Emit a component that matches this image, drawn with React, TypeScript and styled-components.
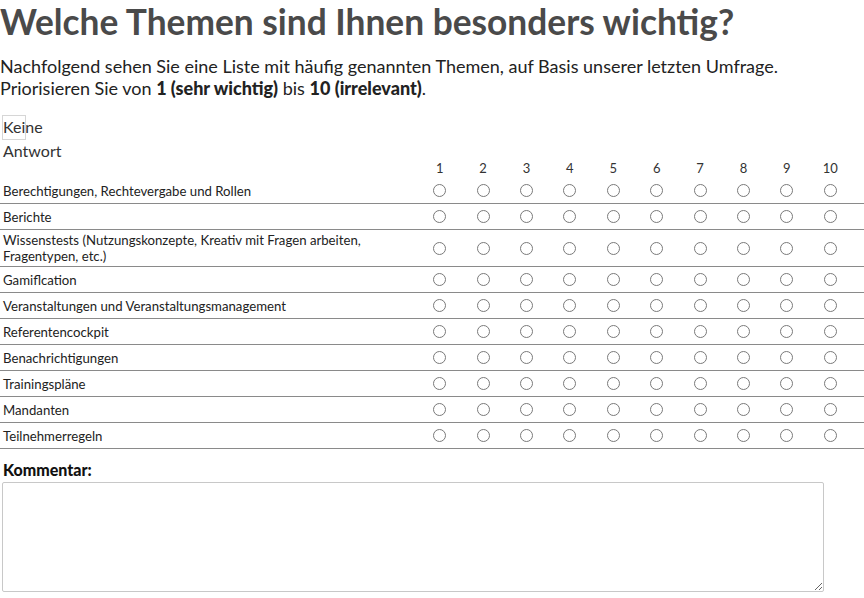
import React from 'react'
import styled, { createGlobalStyle } from 'styled-components'

const GlobalStyle = createGlobalStyle`
  html, body {
    margin: 0;
    padding: 0;
    background: #fff;
  }

  body {
    font-family: Lato, 'Noto Sans', sans-serif;
    color: #222;
  }
`

const Wrapper = styled.div`
  width: 864px;
  padding: 0 0 6px 0;
`

const Title = styled.h1`
  margin: 0;
  font-size: 35.3px;
  line-height: 44px;
  font-weight: 700;
  color: #4a4a4a;
`

const Intro = styled.p`
  margin: 11px 0 0;
  font-size: 18px;
  line-height: 22px;
  color: #222;

  strong {
    font-weight: 900;
  }
`

const Table = styled.div`
  margin-top: 16px;
`

const Grid = styled.div`
  display: grid;
  grid-template-columns: 418px repeat(10, 43.4px) 1fr;
`

const HeaderRow = styled(Grid)`
  align-items: end;
  min-height: 61px;
  padding-bottom: 2px;
`

const NoAnswer = styled.div`
  position: relative;
  align-self: start;
  width: 60px;
  padding-left: 3px;
  font-size: 16px;
  line-height: 24px;
  color: #333;
`

const NoAnswerBox = styled.span`
  position: absolute;
  left: 2px;
  top: 0;
  width: 22px;
  height: 23px;
  border: 1px solid #d6d6d6;
`

const ColNumber = styled.div`
  text-align: center;
  font-size: 13px;
  line-height: 15px;
  color: #333;
`

const Row = styled(Grid)<{ $tall?: boolean }>`
  align-items: center;
  min-height: ${(p) => (p.$tall ? 36 : 25)}px;
  border-bottom: 1px solid #8a8a8a;
`

const Label = styled.div`
  padding: 2px 20px 2px 3px;
  font-size: 13.2px;
  line-height: 16px;
  color: #222;
`

const Cell = styled.div`
  display: flex;
  justify-content: center;
`

const Radio = styled.input`
  appearance: none;
  margin: 0;
  width: 13px;
  height: 13px;
  border: 1px solid #7a7a7a;
  border-radius: 50%;
  background: #fff;
`

const CommentLabel = styled.label`
  display: block;
  margin-top: 13px;
  padding-left: 3px;
  font-size: 16px;
  line-height: 16px;
  font-weight: 900;
  color: #111;
`

const CommentBox = styled.textarea`
  display: block;
  box-sizing: border-box;
  margin: 4px 0 0 2px;
  width: 822px;
  height: 110px;
  border: 1px solid #c8c8c8;
  border-radius: 2px;
  font-family: inherit;
`

const topics = [
  'Berechtigungen, Rechtevergabe und Rollen',
  'Berichte',
  'Wissenstests (Nutzungskonzepte, Kreativ mit Fragen arbeiten, Fragentypen, etc.)',
  'Gamiflcation',
  'Veranstaltungen und Veranstaltungsmanagement',
  'Referentencockpit',
  'Benachrichtigungen',
  'Trainingspläne',
  'Mandanten',
  'Teilnehmerregeln',
]

const ranks = [1, 2, 3, 4, 5, 6, 7, 8, 9, 10]

export default function App() {
  return (
    <Wrapper>
      <GlobalStyle />
      <Title>Welche Themen sind Ihnen besonders wichtig?</Title>
      <Intro>
        Nachfolgend sehen Sie eine Liste mit häufig genannten Themen, auf Basis unserer letzten Umfrage.
        <br />
        Priorisieren Sie von <strong>1 (sehr wichtig)</strong> bis <strong>10 (irrelevant)</strong>.
      </Intro>

      <Table>
        <HeaderRow>
          <NoAnswer>
            <NoAnswerBox />
            Keine Antwort
          </NoAnswer>
          {ranks.map((r) => (
            <ColNumber key={r}>{r}</ColNumber>
          ))}
        </HeaderRow>
        {topics.map((topic, i) => (
          <Row key={topic} $tall={i === 2}>
            <Label>{topic}</Label>
            {ranks.map((r) => (
              <Cell key={r}>
                <Radio type="radio" name={`topic-${i}`} value={r} aria-label={`${topic}: ${r}`} />
              </Cell>
            ))}
          </Row>
        ))}
      </Table>

      <CommentLabel htmlFor="kommentar">Kommentar:</CommentLabel>
      <CommentBox id="kommentar" />
    </Wrapper>
  )
}
